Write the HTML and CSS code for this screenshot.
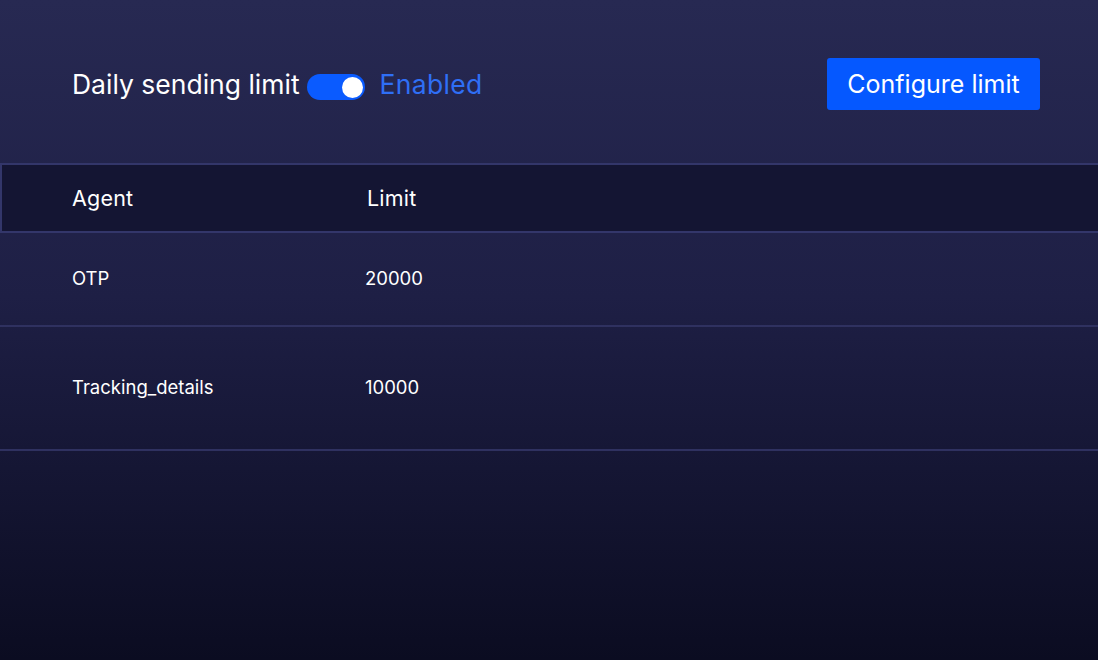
FILE: index.html
```html
<!DOCTYPE html>
<html>
<head>
<meta charset="utf-8">
<link rel="stylesheet" href="styles.css">
</head>
<body>
<div class="page">
  <div class="topbar">
    <div class="title-group">
      <span class="title">Daily sending limit</span>
      <span class="toggle"><span class="knob"></span></span>
      <span class="status">Enabled</span>
    </div>
    <button class="btn">Configure limit</button>
  </div>
  <div class="table">
    <div class="thead">
      <div class="col-agent">Agent</div>
      <div class="col-limit">Limit</div>
    </div>
    <div class="row row-1">
      <div class="col-agent">OTP</div>
      <div class="col-limit">20000</div>
    </div>
    <div class="row row-2">
      <div class="col-agent">Tracking_details</div>
      <div class="col-limit">10000</div>
    </div>
  </div>
</div>
</body>
</html>
```
FILE: styles.css
```css
html, body {
  margin: 0;
  padding: 0;
  height: 100%;
}
body {
  font-family: Inter, "Noto Sans", sans-serif;
  color: #ffffff;
  background: linear-gradient(180deg, #272952 0%, #1e1f45 45%, #0b0c21 100%);
}
.page {
  width: 1098px;
  height: 660px;
}
.topbar {
  height: 163px;
  box-sizing: border-box;
  padding: 58px 58px 0 72px;
  display: flex;
  justify-content: space-between;
  align-items: flex-start;
}
.title-group {
  display: flex;
  align-items: center;
  height: 52px;
}
.title {
  font-size: 26.5px;
  color: #ffffff;
}
.toggle {
  width: 58px;
  height: 26px;
  border-radius: 13px;
  background: #0a5bff;
  margin-left: 7px;
  margin-top: 6px;
  display: flex;
  align-items: center;
  justify-content: flex-end;
  padding-right: 2px;
  box-sizing: border-box;
}
.knob {
  width: 21px;
  height: 21px;
  border-radius: 50%;
  background: #ffffff;
}
.status {
  font-size: 26.5px;
  letter-spacing: 0.3px;
  color: #2f6ff6;
  margin-left: 15px;
}
.btn {
  width: 213px;
  height: 52px;
  border: none;
  border-radius: 3px;
  background: #0558ff;
  color: #ffffff;
  font-family: Inter, "Noto Sans", sans-serif;
  font-size: 25px;
  padding: 0;
}
.table {
  display: flex;
  flex-direction: column;
}
.thead {
  height: 70px;
  box-sizing: border-box;
  background: #141533;
  border-top: 2px solid #33366a;
  border-bottom: 2px solid #33366a;
  border-left: 2px solid #33366a;
  display: flex;
  align-items: center;
  font-size: 21.5px;
  letter-spacing: 0.2px;
  padding-left: 70px;
}
.thead .col-agent {
  width: 295px;
}
.row {
  display: flex;
  align-items: center;
  font-size: 18.5px;
  padding-left: 72px;
  box-sizing: border-box;
  border-bottom: 2px solid #2f3160;
}
.row .col-agent {
  width: 293px;
}
.row-1 {
  height: 94px;
  padding-bottom: 2px;
}
.row-2 {
  height: 124px;
  padding-bottom: 2px;
}
```
